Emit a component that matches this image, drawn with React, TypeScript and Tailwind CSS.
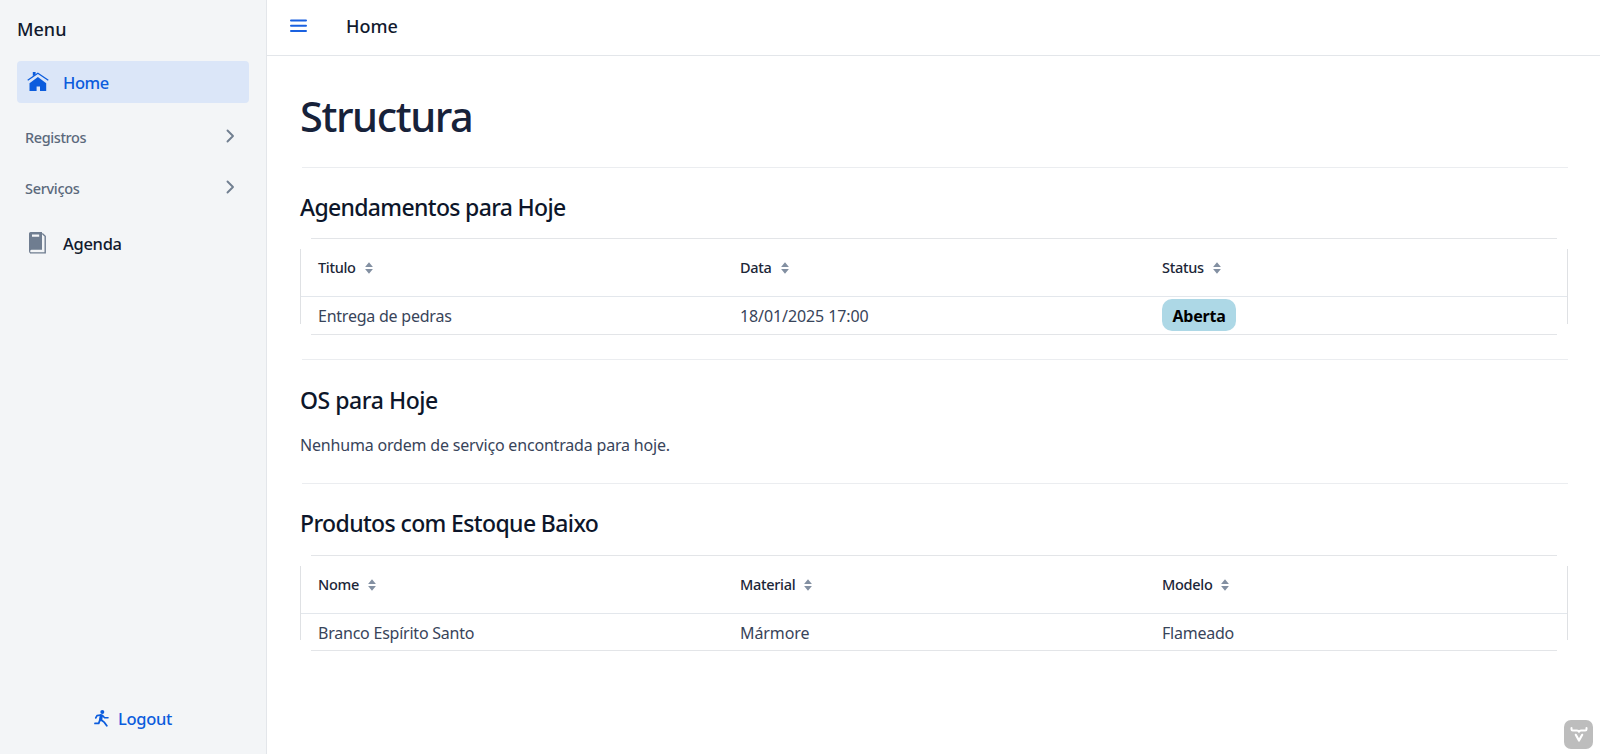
import React from "react";

function HomeIcon() {
  return (
    <svg className="h-[22px] w-[22px] shrink-0" viewBox="0 0 22 22" fill="currentColor">
      <path d="M2.500 12.200 10.900 6.100l8.300 6.100V20H13v-4.600H9.600V20H2.500z" />
      <path d="M5.800 1h2.800v2.200L5.800 5.200z" />
      <path d="M.7 9.200 10.900 2.300l10.400 6.900" fill="none" stroke="currentColor" strokeWidth="1.300" />
    </svg>
  );
}

function BookIcon() {
  return (
    <svg className="h-[22px] w-[17px] shrink-0" viewBox="0 0 17 22" fill="currentColor">
      <path fillRule="evenodd" d="M0 1.6A1.6 1.6 0 0 1 1.6 0H13v17.7H2.8a1.4 1.4 0 0 0-.9 2.6V21.700A2.800 2.800 0 0 1 0 19zM3 2.400v2.400h7.200V2.400z" />
      <path d="M1.600 20.900H16.200V4.200L13.300 1.600" fill="none" stroke="currentColor" strokeWidth="1.400" />
    </svg>
  );
}

function RunIcon() {
  return (
    <svg className="-mt-px h-[17px] w-[15px] shrink-0" viewBox="0 0 15 17" fill="none" stroke="currentColor" strokeLinecap="round" strokeLinejoin="round">
      <circle cx="8.300" cy="2.100" r="2" fill="currentColor" stroke="none" />
      <path d="M7.300 5.700 6.600 9.600" strokeWidth="3.200" />
      <path d="M6.500 5 3 5.600 1.700 8M8.600 5.600 10.600 7.700H14" strokeWidth="1.600" />
      <path d="M7.600 10.200 10.400 12.400 12.800 15.800M5.900 10 4.700 13.400H1" strokeWidth="1.800" />
    </svg>
  );
}

function Chevron() {
  return (
    <svg className="-mt-[2px] h-[14px] w-[9px]" viewBox="0 0 9 14" fill="none" stroke="#717f91" strokeWidth="1.900" strokeLinecap="round" strokeLinejoin="round">
      <path d="M1.500 1.500 7 7l-5.500 5.500" />
    </svg>
  );
}

function SortIcon() {
  return (
    <svg className="h-[12px] w-[8px]" viewBox="0 0 8 12" fill="#8390a2">
      <path d="M4 .3 7.900 5H.1zM4 11.700.1 7h7.800z" />
    </svg>
  );
}

function Heading({ children, track }: { children: React.ReactNode; track: string }) {
  return <h2 className={`text-[23px] leading-[30px] font-medium whitespace-nowrap text-[#0d162a] ${track}`}>{children}</h2>;
}

function Grid({ columns, row, rowClass }: { columns: string[]; row: React.ReactNode[]; rowClass: string }) {
  return (
    <div className="relative">
      <div className="mx-[11px] h-px bg-[#e3e5e8]" />
      <div className="mx-px grid h-[57px] grid-cols-3">
        {columns.map((c) => (
          <div key={c} className="flex items-center gap-[9px] pl-[17px] text-[14.5px] font-medium tracking-[-0.3px] text-[#1c2638]">
            {c}
            <SortIcon />
          </div>
        ))}
      </div>
      <div className="h-px bg-[#e3e7ec]" />
      <div className={`mx-px grid grid-cols-3 ${rowClass}`}>
        {row.map((c, i) => (
          <div key={i} className={`flex items-center pl-[17px] text-[16px] text-[#38445a] ${i === 1 ? "tracking-[-0.1px]" : "tracking-[-0.23px]"}`}>{c}</div>
        ))}
      </div>
      <div className="mx-[11px] h-px bg-[#e3e5e8]" />
      <div className="absolute top-[11px] bottom-[11px] left-0 w-px bg-[#dfe1e4]" />
      <div className="absolute top-[11px] right-0 bottom-[11px] w-px bg-[#dfe1e4]" />
    </div>
  );
}

export default function App() {
  return (
    <div className="flex h-[754px] w-[1600px] overflow-hidden bg-white font-['Noto_Sans',sans-serif] text-[#111a2e]">
      <aside className="flex w-[267px] shrink-0 flex-col border-r border-[#e3e6ea] bg-[#f3f5f7] px-[17px]">
        <h2 className="mt-[17px] text-[18px] leading-6 font-medium">Menu</h2>
        <a className="mt-5 flex h-[42px] items-center gap-[14px] rounded bg-[#dbe6f8] pl-[10px] text-[16.500px] font-medium tracking-[-0.4px] text-[#0b5cdd]">
          <HomeIcon />
          <span className="mt-[2px]">Home</span>
        </a>
        <div className="mt-[22px] flex h-6 items-center justify-between pr-[14px] pl-2 text-[14.500px] font-medium tracking-[-0.4px] text-[#5b697c]">
          <span className="mt-px">Registros</span>
          <Chevron />
        </div>
        <div className="mt-[27px] flex h-6 items-center justify-between pr-[14px] pl-2 text-[14.500px] font-medium tracking-[-0.3px] text-[#5b697c]">
          <span className="mt-px">Serviços</span>
          <Chevron />
        </div>
        <a className="mt-[32px] flex h-6 items-center gap-[17px] pl-3 text-[16.500px] leading-6 font-medium tracking-[-0.3px]">
          <span className="-mt-[3px] text-[#6f7d90]">
            <BookIcon />
          </span>
          Agenda
        </a>
        <button className="mt-auto mb-[23px] flex h-6 items-center justify-center gap-[9px] text-[16.500px] font-medium tracking-[-0.3px] text-[#0b5cdd]">
          <RunIcon />
          Logout
        </button>
      </aside>
      <main className="flex min-w-0 flex-1 flex-col">
        <header className="flex h-14 items-center border-b border-[#e3e6ea] pl-[23px]">
          <svg className="-mt-[3px] h-[14px] w-[17px]" viewBox="0 0 17 14" stroke="#1a61e0" strokeWidth="2" strokeLinecap="round">
            <path d="M1 1.500h15M1 6.800h15M1 12.100h15" />
          </svg>
          <span className="-mt-[2px] ml-[39px] text-[18px] font-medium">Home</span>
        </header>
        <div className="pr-8 pl-[33px]">
          <h1 className="h-[111px] pt-[33px] text-[41.500px] leading-[54px] font-medium tracking-[-1.400px] text-[#17223a]">Structura</h1>
          <section className="ml-0">
            <hr className="mb-6 ml-[2px] border-[#ebedf0]" />
            <Heading track="tracking-[-0.67px]">Agendamentos para Hoje</Heading>
            <div className="mt-4">
              <Grid
                columns={["Titulo", "Data", "Status"]}
                row={[
                  "Entrega de pedras",
                  "18/01/2025 17:00",
                  <span key="s" className="-mt-px flex h-8 w-[74px] items-center justify-center rounded-[10px] bg-[#add8e6] pt-[2px] text-[16px] font-bold text-black">Aberta</span>,
                ]}
                rowClass="h-[37px]"
              />
            </div>
          </section>
          <section>
            <hr className="mt-6 mb-[25px] ml-[2px] border-[#ebedf0]" />
            <Heading track="tracking-[-0.45px]">OS para Hoje</Heading>
            <p className="mt-[18px] text-[16px] leading-6 tracking-[-0.185px] text-[#38445a]">Nenhuma ordem de serviço encontrada para hoje.</p>
          </section>
          <section>
            <hr className="mt-[26px] mb-6 ml-[2px] border-[#ebedf0]" />
            <Heading track="tracking-[-0.62px]">Produtos com Estoque Baixo</Heading>
            <div className="mt-[17px]">
              <Grid
                columns={["Nome", "Material", "Modelo"]}
                row={["Branco Espírito Santo", "Mármore", "Flameado"]}
                rowClass="h-9 pt-px"
              />
            </div>
          </section>
        </div>
      </main>
      <div className="absolute top-[720px] left-[1564px] flex h-[29px] w-[29px] items-center justify-center rounded-[7px] bg-[#bdbdbd]">
        <svg className="h-[18px] w-[18px]" viewBox="0 0 18 18" fill="none" stroke="#fff" strokeWidth="2" strokeLinecap="round" strokeLinejoin="round">
          <path d="M1.500 2v1.200q0 1.300 1.300 1.300H7q1.500 0 2 1.300.5-1.300 2-1.300h4.200q1.300 0 1.300-1.300V2" />
          <path d="M5.800 8.800 9 14.500l3.200-5.700" strokeWidth="2.200" />
        </svg>
      </div>
    </div>
  );
}
